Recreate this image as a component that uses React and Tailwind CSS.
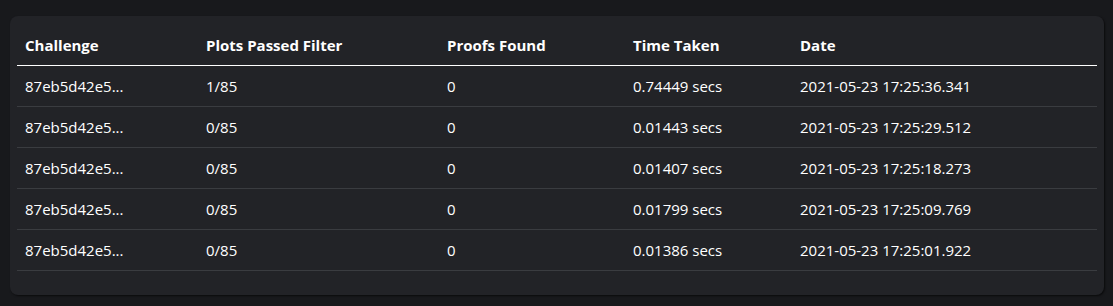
import React from "react";

const rows = [
  ["87eb5d42e5...", "1/85", "0", "0.74449 secs", "2021-05-23 17:25:36.341"],
  ["87eb5d42e5...", "0/85", "0", "0.01443 secs", "2021-05-23 17:25:29.512"],
  ["87eb5d42e5...", "0/85", "0", "0.01407 secs", "2021-05-23 17:25:18.273"],
  ["87eb5d42e5...", "0/85", "0", "0.01799 secs", "2021-05-23 17:25:09.769"],
  ["87eb5d42e5...", "0/85", "0", "0.01386 secs", "2021-05-23 17:25:01.922"],
];

const heads = ["Challenge", "Plots Passed Filter", "Proofs Found", "Time Taken", "Date"];
const widths = ["w-[181px]", "w-[241px]", "w-[186px]", "w-[167px]", ""];

export default function App() {
  return (
    <div className="w-[1113px] h-[306px] bg-[#18191c] pt-[16px] pl-[10px] pr-[9px] font-['Open_Sans','Noto_Sans',sans-serif] text-white">
      <div className="h-[279px] rounded-[8px] bg-[#222327] px-[7px] pt-[8px] shadow-[1px_1px_2px_rgba(0,0,0,0.6)]">
        <table className="w-full border-collapse table-fixed text-[15px]">
          <thead>
            <tr className="border-b border-white">
              {heads.map((h, i) => (
                <th key={h} className={`h-[41px] px-[8px] pt-[2px] text-left font-bold ${widths[i]}`}>
                  {h}
                </th>
              ))}
            </tr>
          </thead>
          <tbody>
            {rows.map((r, i) => (
              <tr key={i} className="border-b border-[#3a3c40]">
                {r.map((c, j) => (
                  <td key={j} className="h-[41px] px-[8px] pt-[2px] text-left">
                    {c}
                  </td>
                ))}
              </tr>
            ))}
          </tbody>
        </table>
      </div>
    </div>
  );
}
